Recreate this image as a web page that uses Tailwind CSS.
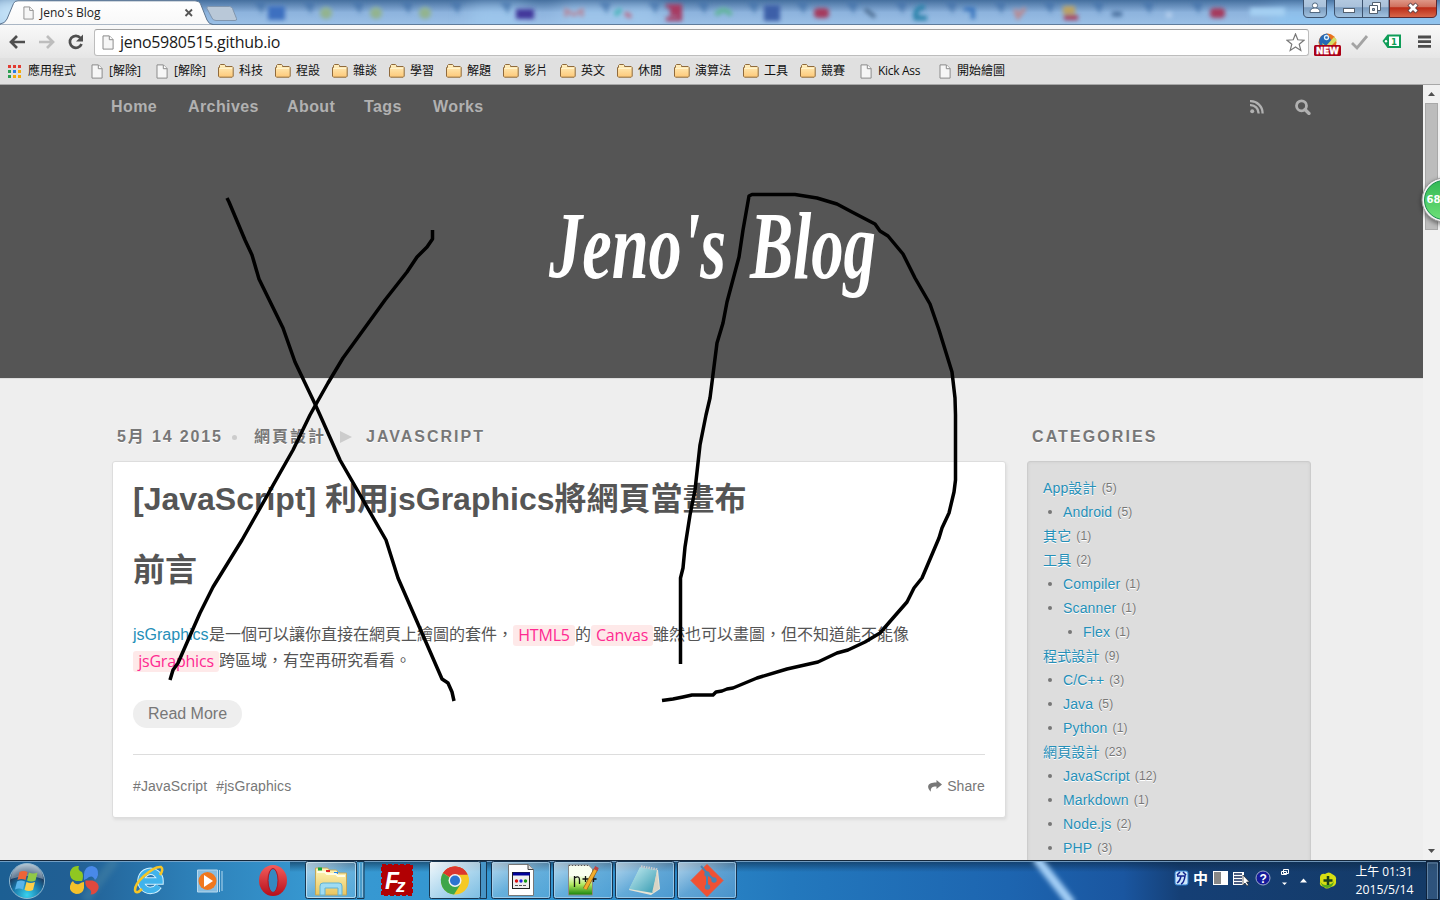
<!DOCTYPE html>
<html lang="zh-Hant">
<head>
<meta charset="utf-8">
<title>Jeno's Blog</title>
<script src="https://cdn.jsdelivr.net/npm/@tailwindcss/browser@4"></script>
</head>
<body class="w-[1440px] h-[900px] overflow-hidden relative flex flex-col bg-[#eee] font-['Liberation_Sans','Noto_Sans_CJK_TC',sans-serif]">

<svg class="absolute w-0 h-0" aria-hidden="true">
  <defs>
    <linearGradient id="fold" x1="0" y1="0" x2="0" y2="1"><stop offset="0" stop-color="#fff0c0"/><stop offset="1" stop-color="#fdc878"/></linearGradient>
    <symbol id="page" viewBox="0 0 12 15"><path d="M1 .9h6.4l3.7 3.7v9.5H1z" fill="#f6f6f6" stroke="#8b8b8b" stroke-width="1"/><path d="M7.3 1v3.7h3.8" fill="#fff" stroke="#8b8b8b" stroke-width="1"/></symbol>
    <symbol id="folder" viewBox="0 0 16 14"><path d="M.5 12.2V3.5h1v-2l1-1h4l1 1v1h6.700l1 1v8.700l-1 1H1.500z" fill="url(#fold)" stroke="#8f6a3c"/><path d="M1.600 4.300h12.500" stroke="#fffbe0" stroke-width=".8"/></symbol>
  </defs>
</svg>

<!-- Title bar -->
<header class="h-[25px] shrink-0 relative overflow-hidden bg-linear-to-b from-[#456f9e] via-[#8db3dd] to-[#9bc0e6]">
  <svg class="block" width="1440" height="25" viewBox="0 0 1440 25">
    <defs>
      <filter id="b2" x="-50%" y="-50%" width="200%" height="200%"><feGaussianBlur stdDeviation="2"/></filter>
      <filter id="b8" x="-50%" y="-100%" width="200%" height="300%"><feGaussianBlur stdDeviation="9"/></filter>
      <linearGradient id="tab" x1="0" y1="0" x2="0" y2="1"><stop offset="0" stop-color="#fff"/><stop offset="1" stop-color="#f8f8f8"/></linearGradient>
      <linearGradient id="wb" x1="0" y1="0" x2="0" y2="1"><stop offset="0" stop-color="#b5cbe2"/><stop offset=".45" stop-color="#a9c1da"/><stop offset=".5" stop-color="#7b9dc0"/><stop offset="1" stop-color="#a3c3e0"/></linearGradient>
      <linearGradient id="wr" x1="0" y1="0" x2="0" y2="1"><stop offset="0" stop-color="#e3a394"/><stop offset=".45" stop-color="#d0705d"/><stop offset=".5" stop-color="#bc2c17"/><stop offset="1" stop-color="#d9694c"/></linearGradient>
    </defs>
    <g filter="url(#b8)"><rect x="-10" y="-4" width="45" height="34" fill="#c5e3f8"/><rect x="1270" y="12" width="180" height="18" fill="#8cc6f3"/><rect x="470" y="8" width="55" height="20" fill="#9fc9ee"/><rect x="560" y="8" width="100" height="20" fill="#a0c8ec"/></g>
    <g filter="url(#b2)">
      <g fill="#3f6ea8" opacity=".65"><path d="M254 2h12l-4 12zM303 2h12l-4 12zM352 2h12l-4 12zM401 2h12l-4 12zM450 2h12l-4 12zM500 2h12l-4 12zM599 2h12l-4 12zM648 2h12l-4 12zM697 2h12l-4 12zM747 2h12l-4 12zM796 2h12l-4 12zM846 2h12l-4 12zM895 2h12l-4 12zM945 2h12l-4 12zM994 2h12l-4 12zM1043 2h12l-4 12zM1092 2h12l-4 12zM1142 2h12l-4 12zM1191 2h12l-4 12z"/></g>
      <rect x="268" y="6" width="17" height="14" fill="#3c70c0"/>
      <g fill="#93b48f"><circle cx="326" cy="13" r="6"/><circle cx="376" cy="13" r="6"/><circle cx="425" cy="13" r="6"/></g>
      <rect x="516" y="9" width="18" height="10" fill="#43389b"/>
      <path d="M566 17V10l8 5 8-5v7" fill="none" stroke="#b5879c" stroke-width="3"/>
      <path d="M615 15l6-6" stroke="#50b6bd" stroke-width="5"/><path d="M625 13l6 4" stroke="#b76d88" stroke-width="4"/>
      <path d="M666 6h14v4h-8v4h8v5h-14" fill="none" stroke="#a73a62" stroke-width="4"/>
      <path d="M716 15q8-10 15 0" fill="none" stroke="#62b59b" stroke-width="5"/>
      <rect x="764" y="5" width="16" height="16" fill="#3e5ea8"/>
      <rect x="814" y="8" width="15" height="10" rx="4" fill="#a53a5d"/>
      <path d="M865 9l10 8" stroke="#48698e" stroke-width="4"/>
      <path d="M925 7q-11 0-9 11h11" fill="none" stroke="#2a82aa" stroke-width="5"/>
      <path d="M964 9h9v10" fill="none" stroke="#3973bd" stroke-width="4"/>
      <path d="M1015 9l3 8 7-9" fill="none" stroke="#b98991" stroke-width="4"/>
      <rect x="1063" y="6" width="12" height="8" fill="#bea25f"/><rect x="1064" y="15" width="14" height="5" fill="#a93c5c"/>
      <path d="M1112 14h10" stroke="#496f9e" stroke-width="5"/><circle cx="1169" cy="15" r="3" fill="#b7d0ee"/>
      <rect x="1210" y="8" width="15" height="10" rx="4" fill="#a53a5d"/>
      <path d="M1250 12h35" stroke="#a5d0f3" stroke-width="8"/>
    </g>
    <path d="M0 24.500H1440" stroke="#5f7c9b"/>
    <path d="M0 25V24q5-.5 7-5L13.500 3.500Q14.500.8 18 .8H195q4 0 5.500 3L207 20q2 4.500 6 4.500V25z" fill="url(#tab)" stroke="#5d7590"/>
    <path d="M207 8.500q-.7-2 1.500-2h21q2 0 3 2l4 10q.8 2-1.500 2h-19q-3 0-4-2.500z" fill="#b9c8d8" stroke="#8196ae"/>
    <use href="#page" x="23" y="6" width="11" height="14"/>
    <path d="M185.500 9.500l6.500 6.500m0-6.500l-6.500 6.500" stroke="#555" stroke-width="1.800"/>
    <path d="M1303.500-2V13q0 4.500 4.500 4.500h14q4.500 0 4.500-4.500V-2z" fill="url(#wb)" stroke="#3c526e"/>
    <circle cx="1315" cy="5.500" r="2.600" fill="#fff" stroke="#526981"/><path d="M1310 12.500q0-4.500 5-4.500t5 4.500z" fill="#fff" stroke="#526981"/>
    <path d="M1334.500-2V13q0 4.500 4.500 4.500H1389V-2z" fill="url(#wb)" stroke="#3c526e"/>
    <path d="M1389.500-2V17.500H1432q4.500 0 4.500-4.500V-2z" fill="url(#wr)" stroke="#5c2830"/>
    <path d="M1362.500 0V17" stroke="#3c526e"/>
    <rect x="1343.500" y="8.500" width="11" height="4" fill="#fff" stroke="#53606f"/>
    <path d="M1372.500 2.500h8v8h-8z" fill="#fff" stroke="#53606f"/><path d="M1369.500 5.500h8v8h-8z" fill="#fff" stroke="#53606f"/><path d="M1372.500 8.500h2v2h-2z" fill="#9db6d1" stroke="#53606f"/>
    <path d="M1409 4l8 8m0-8l-8 8" stroke="#5a4248" stroke-width="4.500"/><path d="M1409.500 4.500l7 7m0-7l-7 7" stroke="#fff" stroke-width="2.800"/>
  </svg>
  <span class="absolute left-[40px] top-[4px] text-[12px] leading-[18px] font-['Open_Sans',sans-serif] text-[#222]">Jeno's Blog</span>
</header>

<!-- Address bar -->
<div class="h-[33px] shrink-0 bg-linear-to-b from-[#f9f9f9] to-[#e6e6e6] flex items-center pl-[8px]">
  <svg width="80" height="20" viewBox="0 0 80 20" class="mr-[6px] shrink-0">
    <path d="M17 10H3.500M9 4L3 10l6 6" fill="none" stroke="#4e4e4e" stroke-width="2.700"/>
    <path d="M31 10h13.500M39 4l6 6-6 6" fill="none" stroke="#bdbdbd" stroke-width="2.700"/>
    <path d="M72.500 6A6 6 0 1 0 73.500 12" fill="none" stroke="#4e4e4e" stroke-width="2.700"/><path d="M75 2.500v7h-7z" fill="#4e4e4e"/>
  </svg>
  <div class="w-[1215px] h-[27px] mt-px rounded-[3px] bg-white border border-[#bdbdbd] border-t-[#a1a1a1] flex items-center pl-[7px] pr-[3px]">
    <svg width="12" height="15"><use href="#page" width="12" height="15"/></svg>
    <span class="ml-[6px] text-[16px] leading-[24px] font-['Open_Sans',sans-serif] tracking-[-0.3px] text-[#1a1a1a]">jeno5980515.github.io</span>
    <svg class="ml-auto" width="19" height="19" viewBox="0 0 19 19"><path d="M9.500 1l2.300 5.800 6.200.4-4.800 4 1.600 6.200-5.300-3.400-5.300 3.400 1.600-6.200-4.800-4 6.200-.4z" fill="#fff" stroke="#777" stroke-width="1.200"/></svg>
  </div>
  <svg class="ml-[4px] shrink-0" width="125" height="30" viewBox="1313 28 125 30">
    <circle cx="1327.500" cy="43.500" r="9" fill="#e8721e"/><path d="M1319 42a8.500 8.500 0 0 1 8-7.500l5 8-5 6-7-2z" fill="#2469b5"/><circle cx="1326.500" cy="38.500" r="2" fill="none" stroke="#d9efff" stroke-width="1.300"/><path d="M1322 44l4 3 8-9 3 3-8 8h-5z" fill="#d2df66"/>
    <rect x="1314" y="46" width="27" height="11" rx="1.500" fill="#ab0017"/>
    <text x="1316" y="55" font-family="DejaVu Sans" font-weight="bold" font-size="9.500" textLength="23" lengthAdjust="spacingAndGlyphs" fill="#fff" stroke="#fff" stroke-width=".4">NEW</text>
    <path d="M1352 44l5 5 10-12" fill="none" stroke="#a3a3a3" stroke-width="2.800"/>
    <path d="M1382.500 42l5-6.500H1401v13.500h-13.500z" fill="#0f9d58"/><rect x="1389" y="37.500" width="10" height="9.500" fill="#fff"/><circle cx="1386" cy="42.200" r="1.200" fill="#fff"/>
    <text x="1391" y="46" font-family="DejaVu Sans" font-weight="bold" font-size="9" textLength="6" lengthAdjust="spacingAndGlyphs" fill="#0f9d58">1</text>
    <path d="M1418 38h13m-13 4.700h13m-13 4.700h13" stroke="#4c4c4c" stroke-width="2.800"/>
  </svg>
</div>

<!-- Bookmarks -->
<nav class="h-[27px] shrink-0 bg-[#e0e0e0] border-b border-[#a8a8a8] flex items-center text-[12px] leading-[16px] text-[#111] whitespace-nowrap font-['Open_Sans','Noto_Sans_CJK_TC',sans-serif] pl-[8px]">
  <a class="flex items-center w-[83px] shrink-0"><svg class="mr-[7px]" width="13" height="13" viewBox="0 0 13 13"><g><path d="M0 0h3v3H0zM5 0h3v3H5zM10 0h3v3h-3z" fill="#e23b32"/><path d="M0 5h3v3H0z" fill="#2d9f51"/><path d="M5 5h3v3H5z" fill="#297be7"/><path d="M10 5h3v3h-3zM5 10h3v3H5zM10 10h3v3h-3z" fill="#f3aa0c"/><path d="M0 10h3v3H0z" fill="#2d9f51"/></g></svg>應用程式</a>
  <a class="flex items-center w-[65px] shrink-0"><svg class="mr-[6px]" width="12" height="15"><use href="#page" width="12" height="15"/></svg>[解除]</a>
  <a class="flex items-center w-[62px] shrink-0"><svg class="mr-[6px]" width="12" height="15"><use href="#page" width="12" height="15"/></svg>[解除]</a>
  <a class="flex items-center w-[57px] shrink-0"><svg class="mr-[5px]" width="16" height="14"><use href="#folder" width="16" height="14"/></svg>科技</a>
  <a class="flex items-center w-[57px] shrink-0"><svg class="mr-[5px]" width="16" height="14"><use href="#folder" width="16" height="14"/></svg>程設</a>
  <a class="flex items-center w-[57px] shrink-0"><svg class="mr-[5px]" width="16" height="14"><use href="#folder" width="16" height="14"/></svg>雜談</a>
  <a class="flex items-center w-[57px] shrink-0"><svg class="mr-[5px]" width="16" height="14"><use href="#folder" width="16" height="14"/></svg>學習</a>
  <a class="flex items-center w-[57px] shrink-0"><svg class="mr-[5px]" width="16" height="14"><use href="#folder" width="16" height="14"/></svg>解題</a>
  <a class="flex items-center w-[57px] shrink-0"><svg class="mr-[5px]" width="16" height="14"><use href="#folder" width="16" height="14"/></svg>影片</a>
  <a class="flex items-center w-[57px] shrink-0"><svg class="mr-[5px]" width="16" height="14"><use href="#folder" width="16" height="14"/></svg>英文</a>
  <a class="flex items-center w-[57px] shrink-0"><svg class="mr-[5px]" width="16" height="14"><use href="#folder" width="16" height="14"/></svg>休閒</a>
  <a class="flex items-center w-[69px] shrink-0"><svg class="mr-[5px]" width="16" height="14"><use href="#folder" width="16" height="14"/></svg>演算法</a>
  <a class="flex items-center w-[57px] shrink-0"><svg class="mr-[5px]" width="16" height="14"><use href="#folder" width="16" height="14"/></svg>工具</a>
  <a class="flex items-center w-[60px] shrink-0"><svg class="mr-[5px]" width="16" height="14"><use href="#folder" width="16" height="14"/></svg>競賽</a>
  <a class="flex items-center w-[79px] shrink-0"><svg class="mr-[6px]" width="12" height="15"><use href="#page" width="12" height="15"/></svg><span class="tracking-[-0.3px]">Kick Ass</span></a>
  <a class="flex items-center"><svg class="mr-[6px]" width="12" height="15"><use href="#page" width="12" height="15"/></svg>開始繪圖</a>
</nav>

<!-- Page viewport -->
<div class="h-[775px] shrink-0 flex overflow-hidden">
  <main class="w-[1423px] shrink-0">
    <section class="h-[294px] bg-[#555] border-b border-[#ddd]">
      <div class="h-[43px] pl-[111px] pr-[112px] flex items-center text-[16px] leading-[20px] font-bold tracking-[0.4px] text-[#b1b1b1]">
        <a class="w-[77px]">Home</a><a class="w-[99px]">Archives</a><a class="w-[77px]">About</a><a class="w-[69px]">Tags</a><a>Works</a>
        <svg class="ml-auto mr-[31px]" width="14" height="14" viewBox="0 0 14 14"><g fill="none" stroke="#b1b1b1" stroke-width="2.300"><path d="M0 5.200A8 8 0 0 1 8.600 13.500"/><path d="M0 1.200A12 12 0 0 1 12.600 13.500"/></g><circle cx="2.200" cy="11.300" r="2" fill="#b1b1b1"/></svg>
        <svg width="16" height="16" viewBox="0 0 16 16"><circle cx="6.500" cy="6.800" r="5" fill="none" stroke="#b1b1b1" stroke-width="2.800"/><path d="M10 10.500l4 4" stroke="#b1b1b1" stroke-width="3.200" stroke-linecap="round"/></svg>
      </div>
      <svg class="mt-[62px] ml-[530px]" width="370" height="130" viewBox="530 190 370 130" role="img" aria-label="Jeno's Blog">
        <g fill="#fff" font-family="Liberation Serif" font-style="italic" font-weight="bold" font-size="96">
          <text x="549" y="278" textLength="177" lengthAdjust="spacingAndGlyphs">Jeno's</text>
          <text x="750" y="278" textLength="126" lengthAdjust="spacingAndGlyphs">Blog</text>
        </g>
      </svg>
    </section>

    <div class="pl-[112px] pt-[44px] flex gap-[21px]">
      <div class="w-[894px]">
        <div class="h-[28px] mb-[10px] pl-[5px] flex items-center text-[16px] leading-[20px] font-bold tracking-[2px] text-[#777] whitespace-nowrap [text-shadow:0_1px_#fff]">
          <span class="w-[115px] shrink-0 tracking-[1.850px]">5月 14 2015</span>
          <span class="w-[5px] h-[5px] rounded-full bg-[#ccc] shrink-0"></span>
          <span class="ml-[17px] w-[86px] shrink-0">網頁設計</span>
          <span class="w-0 h-0 border-y-[6px] border-y-transparent border-l-[12px] border-l-[#ccc] shrink-0 mr-[14px]"></span>
          <span>JAVASCRIPT</span>
        </div>
        <article class="h-[357px] bg-white rounded-[3px] border border-[#ddd] shadow-[1px_2px_3px_#ddd] px-[20px] text-[#555]">
          <h1 class="pt-[17px] text-[32px] leading-[40px] font-bold whitespace-nowrap">[JavaScript] 利用jsGraphics將網頁當畫布</h1>
          <h2 class="mt-[31px] text-[32px] leading-[40px] font-bold">前言</h2>
          <div class="mt-[32px] text-[16px] leading-[26px] whitespace-nowrap">
            <p class="flex items-center h-[26px]"><a class="text-[#258fb8] w-[76px]">jsGraphics</a>是一個可以讓你直接在網頁上繪圖的套件，<code class="w-[62px] h-[21px] leading-[21px] rounded-[3px] bg-[#fee9e9] text-[#ff2a92] text-center tracking-[-0.2px] font-['Open_Sans',sans-serif]">HTML5</code>的<code class="w-[62px] h-[21px] leading-[21px] rounded-[3px] bg-[#fee9e9] text-[#ff2a92] text-center tracking-[-0.2px] font-['Open_Sans',sans-serif]">Canvas</code>雖然也可以畫圖，但不知道能不能像</p>
            <p class="flex items-center h-[26px]"><code class="w-[86px] h-[21px] leading-[21px] rounded-[3px] bg-[#fee9e9] text-[#ff2a92] text-center tracking-[-0.2px] font-['Open_Sans',sans-serif]">jsGraphics</code>跨區域，有空再研究看看。</p>
          </div>
          <a class="mt-[26px] block w-[109px] h-[28px] rounded-full bg-[#eee] text-[#777] text-[16px] leading-[27px] text-center">Read More</a>
          <footer class="mt-[26px] border-t border-[#ddd] h-[63px] flex items-center text-[14px] text-[#777]">
            <a class="mr-[9px] tracking-[0.1px]">#JavaScript</a><a class="tracking-[0.1px]">#jsGraphics</a>
            <svg class="ml-auto mr-[5px]" width="14" height="12" viewBox="0 0 14 12"><path d="M8.500 0L14 4.500 8.500 9V6.500C4.500 6.300 2.500 7.500 2.800 11.800 1 10-.2 8 .2 6 1 3.200 4.500 2.500 8.500 2.600z" fill="#777"/></svg>
            <a class="tracking-[0.1px]">Share</a>
          </footer>
        </article>
      </div>

      <aside class="w-[284px]">
        <h3 class="h-[28px] mb-[10px] pl-[5px] text-[16px] leading-[28px] font-bold tracking-[2.100px] text-[#777] [text-shadow:0_1px_#fff]">CATEGORIES</h3>
        <div class="h-[440px] bg-[#ddd] rounded-[3px] border border-[#ccc] shadow-[inset_0_0_3px_#ccc] pl-[15px] pt-[14px] text-[14px] leading-[24px] tracking-[0.15px] text-[#258fb8] [text-shadow:0_1px_#fff]">
          <ul class="[&_li]:h-[24px] [&_li]:flex [&_li]:items-center [&_li]:whitespace-nowrap [&_span]:text-[12px] [&_span]:text-[#777] [&_span]:ml-[5px] [&_i]:w-[4px] [&_i]:h-[4px] [&_i]:rounded-full [&_i]:bg-[#777] [&_i]:mr-[11px] [&_i]:ml-[5px]">
            <li>App設計<span>(5)</span></li>
            <li><i></i>Android<span>(5)</span></li>
            <li>其它<span>(1)</span></li>
            <li>工具<span>(2)</span></li>
            <li><i></i>Compiler<span>(1)</span></li>
            <li><i></i>Scanner<span>(1)</span></li>
            <li class="pl-[20px]"><i></i>Flex<span>(1)</span></li>
            <li>程式設計<span>(9)</span></li>
            <li><i></i>C/C++<span>(3)</span></li>
            <li><i></i>Java<span>(5)</span></li>
            <li><i></i>Python<span>(1)</span></li>
            <li>網頁設計<span>(23)</span></li>
            <li><i></i>JavaScript<span>(12)</span></li>
            <li><i></i>Markdown<span>(1)</span></li>
            <li><i></i>Node.js<span>(2)</span></li>
            <li><i></i>PHP<span>(3)</span></li>
          </ul>
        </div>
      </aside>
    </div>
  </main>

  <div class="w-[17px] bg-[#f1f1f1] flex flex-col items-center justify-between">
    <div class="flex flex-col items-center">
      <svg width="17" height="18" viewBox="0 0 17 18"><path d="M5 11l3.500-4 3.500 4z" fill="#505050"/></svg>
      <div class="w-[13px] h-[127px] bg-[#bcbcbc] border border-[#a8a8a8]"></div>
    </div>
    <svg width="17" height="18" viewBox="0 0 17 18"><path d="M5 7l3.500 4 3.500-4z" fill="#505050"/></svg>
  </div>
</div>

<!-- Taskbar -->
<footer class="h-[40px] shrink-0 overflow-hidden">
<svg class="block" width="1440" height="40" viewBox="0 860 1440 40">
  <defs>
    <linearGradient id="bar"><stop offset="0" stop-color="#1c5f93"/><stop offset=".05" stop-color="#215f94"/><stop offset=".13" stop-color="#2d7fb7"/><stop offset=".22" stop-color="#3799d2"/><stop offset=".4" stop-color="#3294d0"/><stop offset=".55" stop-color="#2378bd"/><stop offset=".7" stop-color="#1d65b0"/><stop offset=".78" stop-color="#1a56a0"/><stop offset=".82" stop-color="#153f75"/><stop offset="1" stop-color="#143a66"/></linearGradient>
    <linearGradient id="shade" x1="0" y1="0" x2="0" y2="1"><stop offset="0" stop-color="#0d2945" stop-opacity=".7"/><stop offset=".3" stop-color="#0d2945" stop-opacity="0"/></linearGradient>
    <linearGradient id="btn" x1="0" y1="0" x2="1" y2="1"><stop offset="0" stop-color="#fff" stop-opacity=".65"/><stop offset=".5" stop-color="#fff" stop-opacity=".25"/><stop offset="1" stop-color="#fff" stop-opacity=".15"/></linearGradient>
    <linearGradient id="act" x1="0" y1="0" x2="1" y2="1"><stop offset="0" stop-color="#fff" stop-opacity=".95"/><stop offset="1" stop-color="#c5e6f5" stop-opacity=".5"/></linearGradient>
    <radialGradient id="orb" cx=".5" cy=".9" r=".9"><stop offset="0" stop-color="#38d2ee"/><stop offset=".45" stop-color="#1875a8"/><stop offset=".7" stop-color="#1c3c60"/><stop offset="1" stop-color="#a5b8c8"/></radialGradient>
    <linearGradient id="op" x1="0" y1="0" x2="0" y2="1"><stop offset="0" stop-color="#f45d5c"/><stop offset="1" stop-color="#b50f1b"/></linearGradient>
    <linearGradient id="np" x1="0" y1="0" x2="0" y2="1"><stop offset=".35" stop-color="#f9fff0"/><stop offset=".65" stop-color="#b1e860"/><stop offset="1" stop-color="#16820a"/></linearGradient>
    <linearGradient id="pad" x1="0" y1="0" x2="1" y2="1"><stop offset="0" stop-color="#c8eef2"/><stop offset="1" stop-color="#359ab1"/></linearGradient>
    <linearGradient id="fo2" x1="0" y1="0" x2="0" y2="1"><stop offset="0" stop-color="#fff6b8"/><stop offset="1" stop-color="#e8c560"/></linearGradient>
    <filter id="bl" x="-50%" y="-50%" width="200%" height="200%"><feGaussianBlur stdDeviation="2.500"/></filter>
  </defs>
  <rect y="860" width="1440" height="40" fill="url(#bar)"/>
  <rect x="290" y="860" width="1150" height="40" fill="url(#shade)"/>
  <path d="M1036 858l36 46" stroke="#a5d0f7" stroke-width="9" filter="url(#bl)"/>
  <path d="M85 900l30-40" stroke="#669daa" stroke-width="10" opacity=".25" filter="url(#bl)"/>
  <path d="M0 860.500h1440" stroke="#15273a"/><path d="M0 861.500h1440" stroke="#87aed0" opacity=".8"/>

  <!-- Start -->
  <circle cx="27" cy="881" r="17.500" fill="url(#orb)" stroke="#91b8cf"/><path d="M11 879a16 15 0 0 1 32 0q-15-6-32 0z" fill="#d8e4eb" opacity=".4"/>
  <path d="M19.500 872q4-2 8 0l-2 8q-4-2-8 0z" fill="#ed6437"/><path d="M29 872.500q4 2 8.500 0l-2 8q-4 2-8.500 0z" fill="#91c947"/><path d="M17 881.500q4-2 8 0l-2 8q-4-2-8 0z" fill="#5ab4ea"/><path d="M26.500 882q4 2 8.500 0l-2 8q-4 2-8.500 0z" fill="#fbcf49"/>
  <!-- Four petals -->
  <path d="M82 881H76q-7-2-6-9 2-7 9-6-2 4 3 6 2 4 0 9z" fill="#8fc721"/><path d="M84 880v-6q1-8 8-8 7 1 6 9-1 4-3 5-2-5-6-3-2 2-5 3z" fill="#4989e8"/>
  <path d="M84 882v6q-1 6-8 6-7-2-6-8 1-4 3-5 2 4 6 3 3-2 5-2z" fill="#f4c12c"/><path d="M85.500 880.500h7q7 2 6 8-2 6-8 6 2-4-2-6-4-3-3-8z" fill="#df493e"/>
  <!-- Internet Explorer -->
  <path d="M158.500 886A9.500 9.500 0 1 1 160 881H141" fill="none" stroke="#d4f2ff" stroke-width="7.500"/><path d="M158.500 886A9.500 9.500 0 1 1 160 881H141" fill="none" stroke="#40b3ec" stroke-width="5.500"/>
  <path d="M142 889q-6 6-7 1 0-6 9-14 11-10 17-9 3 2-1 8" fill="none" stroke="#f6c526" stroke-width="2.500"/>
  <!-- Media player -->
  <path d="M197.500 870h20v22h-20z" fill="#88bde0" stroke="#b7d9ef"/><path d="M219.500 870v22m2.500-21v20" stroke="#b3d9ef"/><circle cx="207.500" cy="881" r="9" fill="#f0781e"/><path d="M204 875l9 6-9 6z" fill="#fff"/>
  <!-- Opera -->
  <ellipse cx="273" cy="880.500" rx="14" ry="15.500" fill="url(#op)"/><ellipse cx="273" cy="880.500" rx="5" ry="12" fill="#3489c1" stroke="#b31421"/>
  <!-- Explorer group -->
  <g stroke="#183650"><path d="M357 861.500h7v37h-7" fill="#4a9ccb"/><rect x="305.500" y="861.500" width="51" height="37" rx="2" fill="url(#btn)"/></g><path d="M359.500 863v34m3-34v34" stroke="#9ccae4" stroke-width=".8"/>
  <rect x="306.500" y="862.500" width="49" height="35" rx="2" fill="none" stroke="#d5edf8" opacity=".7"/>
  <path d="M315.500 868h12l2 2h7l2 3h8v22h-31z" fill="url(#fo2)" stroke="#c3a65a"/><path d="M318 869h4" stroke="#14a53a" stroke-width="3"/><path d="M326 871h4" stroke="#d22" stroke-width="2"/><path d="M334 873h4" stroke="#28e" stroke-width="2"/><path d="M317 872h8l2 2h9l2 2h7" stroke="#fffce5" fill="none" stroke-width="2"/>
  <path d="M320 895v-9q0-3 3-3h16q3 0 3 3v9h-4v-7h-13v7z" fill="#9fdcf3" stroke="#60b3d5"/>
  <!-- FileZilla -->
  <rect x="382" y="865" width="30" height="30" fill="#b10003" stroke="#b10003" stroke-width="2" stroke-dasharray="4 2"/>
  <text x="385" y="889" font-family="Liberation Sans" font-size="23" font-weight="bold" font-style="italic" fill="#fff">F</text><text x="396" y="892" font-family="Liberation Sans" font-size="19" font-weight="bold" font-style="italic" fill="#fff">z</text>
  <!-- Chrome -->
  <path d="M480 861.500h6.500v37H480" fill="#4795c7" stroke="#183650"/><rect x="429.500" y="861.500" width="51" height="37" rx="2" fill="url(#act)" stroke="#183650"/>
  <circle cx="455" cy="880.500" r="14" fill="#f5c923"/><path d="M455 880.500L443 873a14 14 0 0 1 24.500 1.500H455z" fill="#dc372d"/><path d="M443 873a14 14 0 0 0 11 21.500l6-9.500-5-4z" fill="#3da64a"/><path d="M443 873.200a14 14 0 0 1 24.600 1.300H455z" fill="#dc372d"/><circle cx="455" cy="880.500" r="6.500" fill="#f3f3f3"/><circle cx="455" cy="880.500" r="5" fill="#2d74cf"/>
  <!-- Task buttons -->
  <g fill="url(#btn)" stroke="#16324e"><rect x="491.500" y="861.500" width="59" height="37" rx="2"/><rect x="553.500" y="861.500" width="59" height="37" rx="2"/><rect x="615.500" y="861.500" width="59" height="37" rx="2"/><rect x="677.500" y="861.500" width="59" height="37" rx="2"/></g>
  <g fill="none" stroke="#acd3ed" opacity=".75"><rect x="492.500" y="862.500" width="57" height="35" rx="2"/><rect x="554.500" y="862.500" width="57" height="35" rx="2"/><rect x="616.500" y="862.500" width="57" height="35" rx="2"/><rect x="678.500" y="862.500" width="57" height="35" rx="2"/></g>
  <path d="M508.500 864.500h20l5 5v26h-25z" fill="#fff" stroke="#777"/><path d="M528 864.500v5h5.500" fill="#ddd" stroke="#444"/><rect x="512.500" y="872.500" width="17" height="16" fill="#eee" stroke="#222"/><path d="M513 874h17" stroke="#00009a" stroke-width="3"/><circle cx="516.500" cy="881" r="1.700" fill="#d11"/><circle cx="521" cy="881" r="1.700" fill="#22d"/><circle cx="525.500" cy="881" r="1.700" fill="#191"/><path d="M515 885.500h12" stroke="#555" stroke-dasharray="3 1"/>
  <path d="M568.500 865h20l4 4v26h-24z" fill="url(#np)" stroke="#888"/><path d="M569 865.500h21" stroke="#555" stroke-dasharray="1 2"/><path d="M574.500 886v-11m0 2q5-3 5 2v4m3-5h6m-3-3v6m5-3h6m-3-3v6" transform="translate(0 1)" stroke="#111" fill="none" stroke-width="1.300"/><path d="M585 889l11-20" stroke="#94651c" stroke-width="4.500"/><path d="M585 889l11-20" stroke="#f2ad2c" stroke-width="3"/><path d="M595.500 870l1.500-3" stroke="#b44" stroke-width="4"/>
  <path d="M640 868l-11 22 22 5 9-6-2-19z" fill="#e9e5d5"/><path d="M640 867l17 3-4 23-24-4z" fill="url(#pad)"/><path d="M657 871l2 18-7 4z" fill="#d8d4c5"/><path d="M641 866.500l17 3" stroke="#ccc" stroke-width="2.500" stroke-dasharray="1.500 1"/>
  <path d="M707 864.500l16 16-16 16-16-16z" fill="#f05133" stroke="#f05133" stroke-linejoin="round"/><path d="M701 866l6 7v15m0-15l6 6" stroke="#4a83b0" stroke-width="2" fill="none"/><g fill="#4a83b0"><circle cx="707" cy="874" r="2.700"/><circle cx="707.500" cy="887" r="2.700"/><circle cx="714" cy="880" r="2.700"/></g>

  <!-- Tray -->
  <rect x="1175" y="871" width="13" height="14" rx="2" fill="#cde6fa" stroke="#2a7ed0"/><path d="M1177 875l3-3m3 0l3 3m-9 1h8q-1 7-4 8m0-8q-1 5-4 7" fill="none" stroke="#10238e" stroke-width="1.500"/>
  <text x="1193" y="884" font-family="Noto Sans CJK TC" font-size="15" font-weight="bold" fill="#fff">中</text>
  <rect x="1213.500" y="871.500" width="14" height="13" fill="#fff" stroke="#fff"/><rect x="1214" y="872" width="7" height="12" fill="#888"/>
  <path d="M1233 872h11v13h-11z" fill="#fff"/><path d="M1234 874h8m-8 3h8m-8 3h8m-8 3h8" stroke="#122a5a" stroke-width="1.300"/><path d="M1243 875v10l2-2 2 3 1.500-1-2-3h3z" fill="#fff" stroke="#111" stroke-width=".6"/>
  <circle cx="1263" cy="878" r="7" fill="#151b9b" stroke="#9ca8c9"/><text x="1259.500" y="882.500" font-family="Liberation Sans" font-size="12" font-weight="bold" fill="#fff">?</text>
  <path d="M1283.500 869.500h5v4h-5zM1281.500 871.500h5v3h-5z" fill="#153e70" stroke="#fff"/><path d="M1282 882.500h5l-2.500 2.500zM1300 882.500h7l-3.500-4z" fill="#fff"/>
  <path d="M1320 877q1-4 5-3 4-3 7 0 5 2 4 6 1 6-5 7-5 3-7 0-5-1-4-5z" fill="#d7de13"/><path d="M1320 880q1 5 6 5 6 0 8-4-1 7-7 7-6-1-7-8z" fill="#55a91e"/><path d="M1328 876v9m-4.500-4.500h9" stroke="#193f19" stroke-width="2.500"/>
  <g fill="#fff" font-size="12" font-family="Open Sans,Noto Sans CJK TC,sans-serif"><text x="1355.500" y="876" textLength="57" lengthAdjust="spacingAndGlyphs">上午 01:31</text><text x="1355.500" y="894" textLength="58" lengthAdjust="spacingAndGlyphs">2015/5/14</text></g>
  <rect x="1426.500" y="861.500" width="12" height="38" fill="#5e84a5" fill-opacity=".35" stroke="#0d223c"/><path d="M1427.500 899v-36h10v36" stroke="#7797b5" fill="none" opacity=".7"/>
</svg>
</footer>

<!-- Floating download badge -->
<svg class="absolute left-[1415px] top-[170px]" width="25" height="60" viewBox="1415 170 25 60">
  <defs><linearGradient id="gb" x1="0" y1="0" x2="0" y2="1"><stop offset="0" stop-color="#32b854"/><stop offset="1" stop-color="#6de077"/></linearGradient><filter id="gs"><feGaussianBlur stdDeviation="2"/></filter></defs>
  <circle cx="1444" cy="202" r="23" fill="#000" opacity=".4" filter="url(#gs)"/><circle cx="1444" cy="200" r="22" fill="#f3f3f3" stroke="#999"/><circle cx="1444" cy="200" r="19.500" fill="url(#gb)" stroke="#1b8b50"/>
  <text x="1426.500" y="203" font-size="11" font-weight="bold" font-family="DejaVu Sans" fill="#fff" textLength="14" lengthAdjust="spacingAndGlyphs">68</text>
</svg>

<!-- Freehand drawing layer -->
<svg class="absolute inset-0 pointer-events-none" width="1440" height="900" viewBox="0 0 1440 900">
  <g fill="none" stroke="#000" stroke-width="3.500" stroke-linejoin="round">
    <path d="M227 198L229 202 245 240 252 255 259 279 283 328 295 362 315 404 320 415 340 460 386 540 398 578 442 679 448 683 452 692 454 701"/>
    <path d="M432.500 230V239L427 247 417 257 407 272 385 300 343 358 328 383 315 406 310 415 293 450 242 540 213 587 200 613 178 663 173 670 170 680"/>
    <path d="M680.500 664V578L683 568 685 547 690 515 695 490 700 445 706 415 710 398 717 343 723 323 727 302 739 257 743 230 749 196 752 194.500H795L817 198 837 204 852 212 875 224 880 231 888 236 903 254 915 278 930 304 939 330 952 372 955 398 955.500 415V480L954 492 949 513 942 528 939 538 922 578 914 588 907 602 893 618 880 633 865 642 848 650 837 653 818 662 787 669 757 678 733 688 727 689 722 691 716 692 713 695H692L683 697 673 699 662 700.500"/>
  </g>
</svg>
</body>
</html>
